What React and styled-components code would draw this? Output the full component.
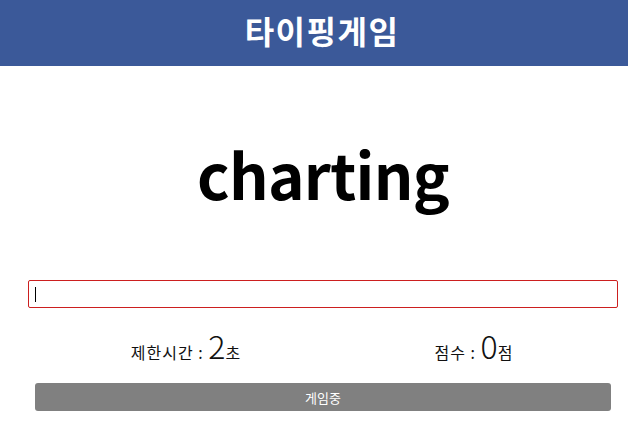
import React, { useEffect, useRef } from 'react';
import styled, { createGlobalStyle } from 'styled-components';

const GlobalStyle = createGlobalStyle`
  body {
    margin: 0;
    background: #ffffff;
    font-family: 'Noto Sans CJK KR', 'Noto Sans', sans-serif;
  }
`;

const Header = styled.header`
  height: 66px;
  box-sizing: border-box;
  padding: 0 0 6px 16px;
  background-color: #3b5999;
  display: flex;
  align-items: center;
  justify-content: center;
`;

const Title = styled.h1`
  margin: 0;
  color: #ffffff;
  font-size: 32px;
  font-weight: 700;
  line-height: 1;
  letter-spacing: 1.5px;
`;

const Main = styled.main`
  padding: 0 10px 0 28px;
`;

const Word = styled.div`
  height: 214px;
  display: flex;
  align-items: center;
  justify-content: center;
  font-size: 62px;
  font-weight: 700;
  color: #000000;
  letter-spacing: -0.7px;
`;

const Field = styled.div`
  position: relative;
  width: 590px;
`;

const Input = styled.input`
  box-sizing: border-box;
  display: block;
  width: 100%;
  height: 28px;
  margin: 0;
  padding: 0 6px;
  border: 1px solid #cc1f1f;
  border-radius: 2px;
  outline: none;
  font-size: 16px;
  font-family: inherit;
  caret-color: transparent;
`;

const Caret = styled.span`
  position: absolute;
  left: 7px;
  top: 7px;
  width: 1px;
  height: 15px;
  background: #000;
  pointer-events: none;
`;

const InfoRow = styled.div`
  display: flex;
  height: 75px;
  padding-top: 2px;
  box-sizing: border-box;
  align-items: center;
`;

const Info = styled.div`
  flex: 1;
  text-align: center;
  font-size: 16px;
  letter-spacing: 1px;
  color: #111;
  padding-left: ${p => p.$shift || 0}px;
  white-space: pre;
`;

const Num = styled.span`
  font-size: 32px;
  font-weight: 300;
  line-height: 1;
  letter-spacing: 0;
`;

const Button = styled.button`
  display: block;
  width: 576px;
  height: 28px;
  margin-left: 7px;
  border: none;
  border-radius: 3px;
  background-color: #808080;
  color: #ffffff;
  font-size: 13px;
  font-family: inherit;
`;

export default function App() {
  const inputRef = useRef(null);
  useEffect(() => {
    inputRef.current && inputRef.current.focus();
  }, []);

  return (
    <>
      <GlobalStyle />
      <Header>
        <Title>타이핑게임</Title>
      </Header>
      <Main>
        <Word>charting</Word>
        <Field>
          <Input ref={inputRef} autoFocus />
          <Caret />
        </Field>
        <InfoRow>
          <Info $shift={14}>제한시간 : <Num>2</Num>초</Info>
          <Info $shift={0}>점수 : <Num>0</Num>점</Info>
        </InfoRow>
        <Button>게임중</Button>
      </Main>
    </>
  );
}
